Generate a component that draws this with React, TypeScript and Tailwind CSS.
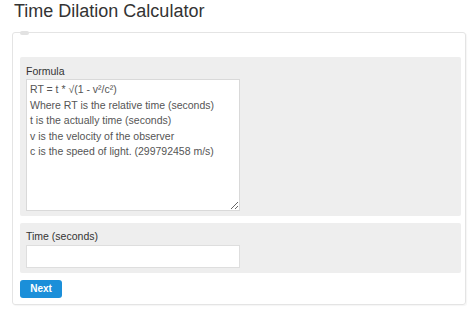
import React from "react";

const FORMULA = `RT = t * √(1 - v²/c²)
Where RT is the relative time (seconds)
t is the actually time (seconds)
v is the velocity of the observer
c is the speed of light. (299792458 m/s)`;

export default function App() {
  return (
    <div className="w-[474px] h-[309px] bg-white overflow-hidden font-['Liberation_Sans',Arial,sans-serif]">
      <h1 className="pl-[14px] text-[18px] leading-[22px] text-[#333333] font-normal">
        Time Dilation Calculator
      </h1>

      <div className="relative ml-[12px] mt-[10px] w-[454px] h-[273px] border border-[#e4e4e4] rounded-[3px] shadow-[1px_1px_1px_rgba(0,0,0,0.04)] pl-[7px] pr-[4px] pt-[24px]">
        <div className="absolute left-[7px] -top-[2px] w-[9px] h-[4px] rounded-full bg-[#e2e2e2]" />

        <div className="bg-[#eeeeee] rounded-[2px] px-[6px] pt-[7px] pb-[5px]">
          <div className="text-[10.5px] leading-[15px] text-[#333333]">Formula</div>
          <textarea
            defaultValue={FORMULA}
            className="block w-[214px] h-[132px] bg-white border border-[#d9d9d9] px-[3px] py-[2px] text-[10.5px] leading-[15.6px] text-[#555555] outline-none"
          />
        </div>

        <div className="mt-[7px] bg-[#eeeeee] rounded-[2px] px-[6px] pt-[6px] pb-[5px]">
          <div className="text-[10.5px] leading-[15px] text-[#333333]">Time (seconds)</div>
          <input
            type="text"
            className="block mt-[1px] w-[214px] h-[23px] bg-white border border-[#dedede] px-[3px] text-[10.5px] text-[#555555] outline-none"
          />
        </div>

        <button className="mt-[7px] w-[42px] h-[18px] rounded-[3px] bg-[#1b8fd9] text-white text-[10px] font-bold leading-[18px]">
          Next
        </button>
      </div>
    </div>
  );
}
